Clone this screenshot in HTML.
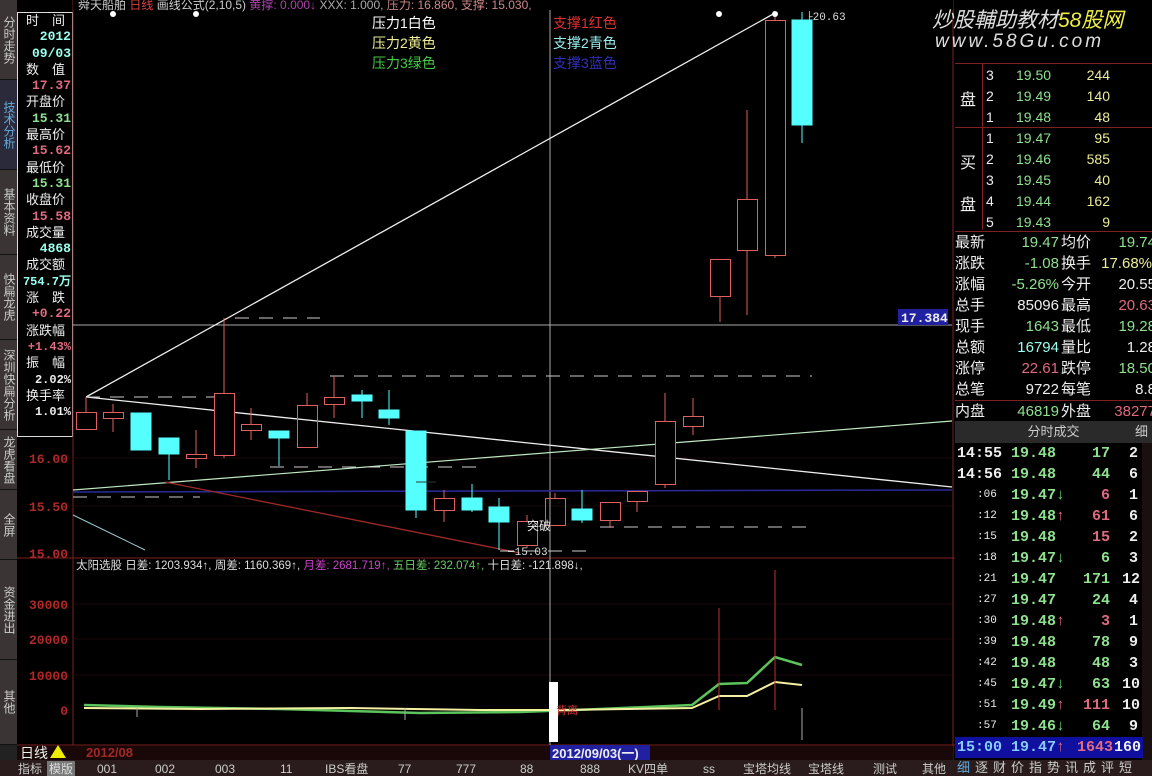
<!DOCTYPE html>
<html><head><meta charset="utf-8"><style>
*{margin:0;padding:0;box-sizing:border-box}
body{width:1152px;height:776px;background:#000;overflow:hidden;position:relative;font-family:"Liberation Sans","Noto Sans CJK SC",sans-serif;color:#ddd}
.a{position:absolute;white-space:nowrap}
.side{position:absolute;left:0;width:17px;background:#3a3434;color:#ccc;font-size:12px;line-height:13px;text-align:center;writing-mode:vertical-rl;display:flex;align-items:center;justify-content:center;border-bottom:1px solid #111}
.info{position:absolute;left:17px;top:12px;width:56px;height:425px;border:1px solid #ddd;font-size:13px;overflow:hidden}
.info div{height:16.3px;line-height:16.3px}
.lb{color:#eee;padding-left:8px}
.v{text-align:right;padding-right:1px;font-weight:bold;font-family:"Liberation Mono",monospace;font-size:13px}
.rp{position:absolute;left:955px;top:0;width:197px;font-size:14px}
.row{position:absolute;left:0;width:197px;height:21px;line-height:21px}
.row span{position:absolute}
.g{color:#8fe08f}.y{color:#ecec9a}.r{color:#e06a80}.w{color:#eee}.c{color:#9fe}
</style></head><body>
<div class="side" style="top:0;height:80px">分时走势</div>
<div class="side" style="top:80px;height:90px;color:#6ad;background:#2a2a3a">技术分析</div>
<div class="side" style="top:170px;height:85px">基本资料</div>
<div class="side" style="top:255px;height:85px">快扁龙虎</div>
<div class="side" style="top:340px;height:90px">深圳快扁分析</div>
<div class="side" style="top:430px;height:60px">龙虎看盘</div>
<div class="side" style="top:490px;height:70px">全屏</div>
<div class="side" style="top:560px;height:100px">资金进出</div>
<div class="side" style="top:660px;height:85px">其他</div>
<div class="side" style="top:745px;height:31px;background:#222"></div>

<div class="info">
<div class="lb">时　间</div><div class="v c">2012</div><div class="v c">09/03</div>
<div class="lb">数　值</div><div class="v r">17.37</div>
<div class="lb">开盘价</div><div class="v g">15.31</div>
<div class="lb">最高价</div><div class="v r">15.62</div>
<div class="lb">最低价</div><div class="v g">15.31</div>
<div class="lb">收盘价</div><div class="v r">15.58</div>
<div class="lb">成交量</div><div class="v c">4868</div>
<div class="lb">成交额</div><div class="v c" style="font-size:12px">754.7万</div>
<div class="lb">涨　跌</div><div class="v r">+0.22</div>
<div class="lb">涨跌幅</div><div class="v r" style="font-size:12px">+1.43%</div>
<div class="lb">振　幅</div><div class="v w" style="font-size:12px">2.02%</div>
<div class="lb">换手率</div><div class="v w" style="font-size:12px">1.01%</div>
</div>

<svg class="a" style="left:0;top:0" width="955" height="776">
<line x1="73" y1="0" x2="73" y2="745" stroke="#802020"/>
<line x1="17" y1="558" x2="955" y2="558" stroke="#802020"/>
<line x1="17" y1="745" x2="955" y2="745" stroke="#802020"/>
<line x1="953" y1="0" x2="953" y2="760" stroke="#802020"/>
<g stroke="#1a0a0a"><line x1="73" y1="458" x2="952" y2="458"/><line x1="73" y1="506" x2="952" y2="506"/><line x1="73" y1="604" x2="952" y2="604"/><line x1="73" y1="639" x2="952" y2="639"/><line x1="73" y1="675" x2="952" y2="675"/></g>
<g fill="#b02828" font-size="13" font-weight="bold" font-family="Liberation Mono,monospace" text-anchor="end">
<text x="68" y="463">16.00</text><text x="68" y="511">15.50</text><text x="68" y="558">15.00</text>
<text x="68" y="609">30000</text><text x="68" y="644">20000</text><text x="68" y="680">10000</text><text x="68" y="715">0</text></g>
<line x1="73" y1="325" x2="952" y2="325" stroke="#aaa"/>
<line x1="550" y1="0" x2="550" y2="745" stroke="#aaa"/>
<line x1="86" y1="397" x2="775" y2="13" stroke="#eee" stroke-width="1.3"/>
<line x1="86" y1="397" x2="952" y2="487" stroke="#eee" stroke-width="1.3"/>
<line x1="73" y1="490" x2="952" y2="421" stroke="#bfe8c0" stroke-width="1.2"/>
<line x1="73" y1="492" x2="952" y2="490" stroke="#2a2a9a" stroke-width="1.5"/>
<line x1="165" y1="482" x2="520" y2="553" stroke="#a02828" stroke-width="1.3"/>
<line x1="73" y1="515" x2="145" y2="550" stroke="#9cc" stroke-width="1"/>
<g stroke="#ccc" stroke-dasharray="14,10">
<line x1="235" y1="318" x2="320" y2="318"/><line x1="86" y1="397" x2="215" y2="397"/>
<line x1="330" y1="376" x2="812" y2="376"/><line x1="270" y1="467" x2="480" y2="467"/>
<line x1="73" y1="497" x2="200" y2="497"/><line x1="600" y1="527" x2="812" y2="527"/>
<line x1="500" y1="551" x2="590" y2="551"/></g>
<g stroke="#e06060" fill="none" stroke-width="1">
<line x1="86" y1="397" x2="86" y2="412"/><rect x="76.5" y="412.5" width="20" height="17"/>
<line x1="113" y1="404" x2="113" y2="432"/><rect x="103.5" y="412.5" width="20" height="6" fill="#000"/>
<line x1="196" y1="430" x2="196" y2="468"/><rect x="186.5" y="454.5" width="20" height="4" fill="#000"/>
<line x1="224" y1="318" x2="224" y2="458"/><rect x="214.5" y="393.5" width="20" height="62" fill="#000"/>
<line x1="251" y1="408" x2="251" y2="440"/><rect x="241.5" y="424.5" width="20" height="6" fill="#000"/>
<line x1="307" y1="393" x2="307" y2="405"/><rect x="297.5" y="405.5" width="20" height="42"/>
<line x1="334" y1="376" x2="334" y2="418"/><rect x="324.5" y="397.5" width="20" height="7" fill="#000"/>
<line x1="444" y1="490" x2="444" y2="522"/><rect x="434.5" y="498.5" width="20" height="12" fill="#000"/>
<line x1="527" y1="515" x2="527" y2="548"/><rect x="517.5" y="521.5" width="20" height="24" fill="#000"/>
<line x1="555" y1="493" x2="555" y2="498"/><rect x="545.5" y="498.5" width="20" height="27"/>
<line x1="610" y1="502" x2="610" y2="528"/><rect x="600.5" y="502.5" width="20" height="18" fill="#000"/>
<line x1="637" y1="491" x2="637" y2="512"/><rect x="627.5" y="491.5" width="20" height="10" fill="#000"/>
<line x1="665" y1="393" x2="665" y2="488"/><rect x="655.5" y="421.5" width="20" height="63" fill="#000"/>
<line x1="693" y1="398" x2="693" y2="435"/><rect x="683.5" y="416.5" width="20" height="10" fill="#000"/>
<line x1="720" y1="259" x2="720" y2="322"/><rect x="710.5" y="259.5" width="20" height="37" fill="#000"/>
<line x1="747" y1="110" x2="747" y2="315"/><rect x="737.5" y="199.5" width="20" height="51" fill="#000"/>
<line x1="775" y1="15" x2="775" y2="258"/><rect x="765.5" y="20.5" width="20" height="235" fill="#000"/>
</g>
<g fill="#5ff" stroke="#5ff">
<rect x="131" y="413" width="20" height="37"/>
<line x1="169" y1="454" x2="169" y2="480"/><rect x="159" y="438" width="20" height="16"/>
<line x1="279" y1="438" x2="279" y2="466"/><rect x="269" y="431" width="20" height="7"/>
<line x1="362" y1="390" x2="362" y2="418"/><rect x="352" y="395" width="20" height="6"/>
<line x1="389" y1="390" x2="389" y2="425"/><rect x="379" y="410" width="20" height="8"/>
<line x1="416" y1="510" x2="416" y2="518"/><rect x="406" y="431" width="20" height="79"/>
<line x1="472" y1="484" x2="472" y2="512"/><rect x="462" y="498" width="20" height="12"/>
<line x1="499" y1="498" x2="499" y2="550"/><rect x="489" y="507" width="20" height="15"/>
<line x1="582" y1="490" x2="582" y2="523"/><rect x="572" y="509" width="20" height="11"/>
<line x1="802" y1="12" x2="802" y2="143"/><rect x="792" y="20" width="20" height="105"/>
</g>
<line x1="416" y1="482" x2="436" y2="482" stroke="#333"/>
<g fill="#fff"><circle cx="113" cy="14" r="3"/><circle cx="196" cy="14" r="3"/><circle cx="719" cy="14" r="3"/><circle cx="775" cy="14" r="3"/></g>
<text x="806" y="20" fill="#ddd" font-size="11" font-family="Liberation Mono,monospace">├20.63</text>
<text x="508" y="555" fill="#ddd" font-size="11" font-family="Liberation Mono,monospace">─15.03</text>
<text x="527" y="530" fill="#eee" font-size="12">突破</text>
<rect x="898" y="309" width="50" height="16" fill="#2020a0"/>
<text x="901" y="322" fill="#eee" font-size="13" font-weight="bold" font-family="Liberation Mono,monospace">17.384</text>
<rect x="73" y="0" width="880" height="10" fill="#000"/>
<text x="78" y="9" font-size="12"><tspan fill="#ccc">舜天船舶 </tspan><tspan fill="#e04040">日线</tspan><tspan fill="#ccc">  画线公式(2,10,5)  </tspan><tspan fill="#a4a">黄撑: 0.000↓ </tspan><tspan fill="#aaa"> XXX: 1.000, </tspan><tspan fill="#c88">压力: 16.860, 支撑: 15.030,</tspan></text>
<text x="372" y="28" fill="#fff" font-size="14">压力1白色</text>
<text x="372" y="48" fill="#ee9" font-size="14">压力2黄色</text>
<text x="372" y="68" fill="#4c4" font-size="14">压力3绿色</text>
<text x="553" y="28" fill="#e03030" font-size="14">支撑1红色</text>
<text x="553" y="48" fill="#9ee" font-size="14">支撑2青色</text>
<text x="553" y="68" fill="#3030c0" font-size="14">支撑3蓝色</text>
<text x="76" y="569" font-size="11.5"><tspan fill="#ddd">太阳选股 日差: 1203.934↑, 周差: 1160.369↑, </tspan><tspan fill="#c4c">月差: 2681.719↑, </tspan><tspan fill="#6c6">五日差: 232.074↑, </tspan><tspan fill="#ddd">十日差: -121.898↓,</tspan></text>
<polyline points="84,705 160,707 280,709 420,713 520,712 600,709 692,705 719,684 747,683 775,657 802,665" fill="none" stroke="#5cc45c" stroke-width="2.5"/>
<polyline points="84,708 200,709 350,708 480,710 560,710 692,708 719,696 747,696 775,682 802,685" fill="none" stroke="#f4f0a0" stroke-width="2"/>
<g stroke="#c03030"><line x1="719" y1="608" x2="719" y2="710"/><line x1="775" y1="570" x2="775" y2="710"/></g>
<g stroke="#aaa"><line x1="802" y1="708" x2="802" y2="740"/><line x1="137" y1="708" x2="137" y2="717"/><line x1="405" y1="708" x2="405" y2="720"/></g>
<rect x="549" y="682" width="9" height="60" fill="#fff"/>
<text x="556" y="714" fill="#c33" font-size="11">背离</text>
<rect x="17" y="746" width="936" height="14" fill="#1a0808"/>
<text x="20" y="758" fill="#eee" font-size="14">日线</text>
<polygon points="50,758 58,745 66,758" fill="#ee0"/>
<text x="86" y="757" fill="#a02828" font-size="13" font-weight="bold">2012/08</text>
<rect x="550" y="745" width="100" height="15" fill="#2020a0"/>
<text x="552" y="758" fill="#eee" font-size="13" font-weight="bold">2012/09/03(一)</text>
<rect x="0" y="760" width="955" height="16" fill="#2a1c1c"/>
<rect x="47" y="761" width="28" height="15" fill="#777"/>
<g fill="#ccc" font-size="12"><text x="18" y="773">指标</text><text x="49" y="773" fill="#ddd">模版</text>
<text x="97" y="773">001</text><text x="155" y="773">002</text><text x="215" y="773">003</text><text x="280" y="773">11</text>
<text x="325" y="773">IBS看盘</text><text x="398" y="773">77</text><text x="456" y="773">777</text><text x="520" y="773">88</text>
<text x="580" y="773">888</text><text x="628" y="773">KV四单</text><text x="703" y="773">ss</text><text x="743" y="773">宝塔均线</text>
<text x="808" y="773">宝塔线</text><text x="873" y="773">测试</text><text x="922" y="773">其他</text></g>
</svg>

<div class="rp">
<div class="a" style="left:-23px;top:4px;font-size:21px;font-style:italic;color:#ddd">炒股輔助教材<span style="color:#ee4">58股网</span></div>
<div class="a" style="left:-20px;top:31px;font-size:19px;font-style:italic;color:#ddd;letter-spacing:3px">www.58Gu.com</div>
<div class="a" style="left:0;top:63px;width:197px;height:167px;border-top:1px solid #802020"></div>
<div class="a" style="left:27px;top:63px;width:1px;height:167px;background:#802020"></div>
<div class="a" style="left:0;top:127px;width:197px;height:1px;background:#802020"></div>
<div class="a" style="left:0;top:231px;width:197px;height:1px;background:#802020"></div>
<div class="a w" style="left:5px;top:86px;font-size:16px">盘</div>
<div class="a w" style="left:5px;top:149px;font-size:16px">买</div>
<div class="a w" style="left:5px;top:191px;font-size:16px">盘</div>
<div class="row" style="top:65px"><span class="w" style="left:31px">3</span><span class="g" style="left:61px">19.50</span><span class="y" style="right:42px">244</span></div>
<div class="row" style="top:86px"><span class="w" style="left:31px">2</span><span class="g" style="left:61px">19.49</span><span class="y" style="right:42px">140</span></div>
<div class="row" style="top:107px"><span class="w" style="left:31px">1</span><span class="g" style="left:61px">19.48</span><span class="y" style="right:42px">48</span></div>
<div class="row" style="top:128px"><span class="w" style="left:31px">1</span><span class="g" style="left:61px">19.47</span><span class="y" style="right:42px">95</span></div>
<div class="row" style="top:149px"><span class="w" style="left:31px">2</span><span class="g" style="left:61px">19.46</span><span class="y" style="right:42px">585</span></div>
<div class="row" style="top:170px"><span class="w" style="left:31px">3</span><span class="g" style="left:61px">19.45</span><span class="y" style="right:42px">40</span></div>
<div class="row" style="top:191px"><span class="w" style="left:31px">4</span><span class="g" style="left:61px">19.44</span><span class="y" style="right:42px">162</span></div>
<div class="row" style="top:212px"><span class="w" style="left:31px">5</span><span class="g" style="left:61px">19.43</span><span class="y" style="right:42px">9</span></div>
<div style="font-size:15px">
<div class="row" style="top:232px"><span class="w" style="left:0">最新</span><span class="g" style="right:93px">19.47</span><span class="w" style="left:106px">均价</span><span class="g" style="right:-4px">19.74</span></div>
<div class="row" style="top:253px"><span class="w" style="left:0">涨跌</span><span class="g" style="right:93px">-1.08</span><span class="w" style="left:106px">换手</span><span class="y" style="right:0">17.68%</span></div>
<div class="row" style="top:274px"><span class="w" style="left:0">涨幅</span><span class="g" style="right:93px">-5.26%</span><span class="w" style="left:106px">今开</span><span class="w" style="right:-4px">20.55</span></div>
<div class="row" style="top:295px"><span class="w" style="left:0">总手</span><span class="w" style="right:93px">85096</span><span class="w" style="left:106px">最高</span><span class="r" style="right:-4px">20.63</span></div>
<div class="row" style="top:316px"><span class="w" style="left:0">现手</span><span class="g" style="right:93px">1643</span><span class="w" style="left:106px">最低</span><span class="g" style="right:-4px">19.28</span></div>
<div class="row" style="top:337px"><span class="w" style="left:0">总额</span><span class="c" style="right:93px">16794</span><span class="w" style="left:106px">量比</span><span class="w" style="right:-4px">1.28</span></div>
<div class="row" style="top:358px"><span class="w" style="left:0">涨停</span><span class="r" style="right:93px">22.61</span><span class="w" style="left:106px">跌停</span><span class="g" style="right:-4px">18.50</span></div>
<div class="row" style="top:379px"><span class="w" style="left:0">总笔</span><span class="w" style="right:93px">9722</span><span class="w" style="left:106px">每笔</span><span class="w" style="right:-4px">8.8</span></div>
<div class="row" style="top:400px;border-top:1px solid #802020"><span class="w" style="left:0">内盘</span><span class="g" style="right:93px">46819</span><span class="w" style="left:106px">外盘</span><span class="r" style="right:-4px">38277</span></div>
</div>
<div class="a" style="left:0;top:421px;width:197px;height:22px;background:#2a2a2a;color:#ccc;font-size:13px;line-height:22px;text-align:center">分时成交<span style="position:absolute;right:4px">细</span></div>
<div class="a" style="left:187px;top:443px;width:10px;height:317px;background:#1a1010"></div>
</div>
<div class="a" style="left:955px;top:443px;width:197px;height:333px;font-size:15px;font-weight:bold;font-family:'Liberation Mono',monospace">
<div class="row" style="top:0"><span class="w" style="left:2px">14:55</span><span class="g" style="left:56px">19.48</span><span class="g" style="right:42px">17</span><span class="w" style="right:14px">2</span></div>
<div class="row" style="top:21px"><span class="w" style="left:2px">14:56</span><span class="g" style="left:56px">19.48</span><span class="g" style="right:42px">44</span><span class="w" style="right:14px">6</span></div>
<div class="row" style="top:42px"><span class="w" style="left:22px;font-size:11px;font-weight:normal">:06</span><span class="g" style="left:56px">19.47<span style="color:#6d6">↓</span></span><span class="r" style="right:42px">6</span><span class="w" style="right:14px">1</span></div>
<div class="row" style="top:63px"><span class="w" style="left:22px;font-size:11px;font-weight:normal">:12</span><span class="g" style="left:56px">19.48<span class="r">↑</span></span><span class="r" style="right:42px">61</span><span class="w" style="right:14px">6</span></div>
<div class="row" style="top:84px"><span class="w" style="left:22px;font-size:11px;font-weight:normal">:15</span><span class="g" style="left:56px">19.48</span><span class="r" style="right:42px">15</span><span class="w" style="right:14px">2</span></div>
<div class="row" style="top:105px"><span class="w" style="left:22px;font-size:11px;font-weight:normal">:18</span><span class="g" style="left:56px">19.47<span style="color:#6d6">↓</span></span><span class="g" style="right:42px">6</span><span class="w" style="right:14px">3</span></div>
<div class="row" style="top:126px"><span class="w" style="left:22px;font-size:11px;font-weight:normal">:21</span><span class="g" style="left:56px">19.47</span><span class="g" style="right:42px">171</span><span class="w" style="right:12px">12</span></div>
<div class="row" style="top:147px"><span class="w" style="left:22px;font-size:11px;font-weight:normal">:27</span><span class="g" style="left:56px">19.47</span><span class="g" style="right:42px">24</span><span class="w" style="right:14px">4</span></div>
<div class="row" style="top:168px"><span class="w" style="left:22px;font-size:11px;font-weight:normal">:30</span><span class="g" style="left:56px">19.48<span class="r">↑</span></span><span class="r" style="right:42px">3</span><span class="w" style="right:14px">1</span></div>
<div class="row" style="top:189px"><span class="w" style="left:22px;font-size:11px;font-weight:normal">:39</span><span class="g" style="left:56px">19.48</span><span class="g" style="right:42px">78</span><span class="w" style="right:14px">9</span></div>
<div class="row" style="top:210px"><span class="w" style="left:22px;font-size:11px;font-weight:normal">:42</span><span class="g" style="left:56px">19.48</span><span class="g" style="right:42px">48</span><span class="w" style="right:14px">3</span></div>
<div class="row" style="top:231px"><span class="w" style="left:22px;font-size:11px;font-weight:normal">:45</span><span class="g" style="left:56px">19.47<span style="color:#6d6">↓</span></span><span class="g" style="right:42px">63</span><span class="w" style="right:12px">10</span></div>
<div class="row" style="top:252px"><span class="w" style="left:22px;font-size:11px;font-weight:normal">:51</span><span class="g" style="left:56px">19.49<span class="r">↑</span></span><span class="r" style="right:42px">111</span><span class="w" style="right:12px">10</span></div>
<div class="row" style="top:273px"><span class="w" style="left:22px;font-size:11px;font-weight:normal">:57</span><span class="g" style="left:56px">19.46<span style="color:#6d6">↓</span></span><span class="g" style="right:42px">64</span><span class="w" style="right:14px">9</span></div>
<div class="row" style="top:294px;background:#1010a0;width:188px"><span style="left:2px;color:#8cf">15:00</span><span style="left:56px;color:#8cf">19.47<span class="r">↑</span></span><span class="r" style="right:30px">1643</span><span class="w" style="right:2px">160</span></div>
<div class="a" style="left:0;top:317px;width:197px;height:16px;background:#2a1c1c;font-size:13px;font-weight:normal;font-family:'Liberation Sans','Noto Sans CJK SC',sans-serif;color:#ccc;line-height:16px;letter-spacing:5px;padding-left:2px"><span style="color:#6ad">细</span>逐财价指势讯成评短</div>
</div>
</body></html>
